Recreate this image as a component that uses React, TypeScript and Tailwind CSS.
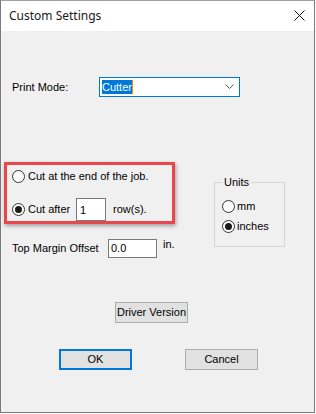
import React from 'react';

function Radio({ checked }: { checked?: boolean }) {
  return (
    <span className="w-[13px] h-[13px] shrink-0 rounded-full border border-[#333333] bg-white flex items-center justify-center">
      {checked && <span className="w-[7px] h-[7px] rounded-full bg-[#1a1a1a]" />}
    </span>
  );
}

function Button({ label, primary }: { label: string; primary?: boolean }) {
  return (
    <button
      className={`w-[73px] h-[21px] bg-[#e1e1e1] flex items-center justify-center text-[11px] leading-none ${
        primary ? 'border-2 border-[#0078d7]' : 'border border-[#adadad]'
      }`}
    >
      {label}
    </button>
  );
}

export default function App() {
  return (
    <div className="w-[316px] h-[414px] bg-white">
      <div className="w-[315px] h-[413px] border border-[#7a7a7a] border-t-[#a0a0a0] bg-[#f0f0f0] flex flex-col text-black text-[11px] font-['Liberation_Sans',Arial,sans-serif]">
        {/* title bar */}
        <div className="h-[30px] shrink-0 bg-white flex items-center justify-between pl-[8px] pr-[9px]">
          <span className="text-[12px] font-['Noto_Sans',sans-serif] text-[#1a1a1a]">Custom Settings</span>
          <svg width="11" height="11" viewBox="0 0 11 11" className="mb-[1px]">
            <path d="M0.5 0.5 L10.5 10.5 M10.5 0.5 L0.5 10.5" stroke="#111" strokeWidth="1" fill="none" />
          </svg>
        </div>

        {/* print mode */}
        <div className="mt-[46px] h-[20px] flex items-center pl-[11px]">
          <span className="w-[87px]">Print Mode:</span>
          <div className="w-[141px] h-[20px] border border-[#0078d7] bg-white flex items-center justify-between pl-[2px] pr-[5px]">
            <span className="bg-[#0078d7] text-white leading-[14px] h-[14px] border-r border-[#ff8a00]">Cutter</span>
            <svg width="9" height="6" viewBox="0 0 9 6">
              <polyline points="0.5,0.5 4.5,4.5 8.5,0.5" stroke="#555" strokeWidth="1" fill="none" />
            </svg>
          </div>
        </div>

        {/* cut options + units */}
        <div className="mt-[65px] flex items-start pl-[3px]">
          <div className="w-[171px] flex flex-col">
            <div className="h-[62px] border-[3px] border-[#e9474b] shadow-[1px_2px_4px_rgba(0,0,0,0.35)] pt-[5px] pl-[5px] flex flex-col">
              <label className="h-[13px] flex items-center gap-[3px]">
                <Radio />
                <span>Cut at the end of the job.</span>
              </label>
              <div className="mt-[15px] h-[23px] flex items-center">
                <Radio checked />
                <span className="w-[51px] pl-[3px]">Cut after</span>
                <div className="w-[30px] h-[23px] border border-[#7a7a7a] bg-white pl-[3px] pt-[3px]">1</div>
                <span className="ml-[7px]">row(s).</span>
              </div>
            </div>
            <div className="mt-[15px] h-[19px] flex items-center pl-[8px]">
              <span className="w-[96px]">Top Margin Offset</span>
              <div className="w-[49px] h-[19px] border border-[#7a7a7a] bg-white pl-[2px] flex items-center">0.0</div>
              <span className="ml-[6px] self-start -mt-[3px]">in.</span>
            </div>
          </div>

          <fieldset className="ml-[39px] mt-[14px] w-[71px] border border-[#d5d5d5] pb-[13px]">
            <legend className="ml-[7px] px-[2px] leading-[13px]">Units</legend>
            <label className="mt-[11px] ml-[7px] h-[13px] flex items-center gap-[2px]">
              <Radio />
              <span>mm</span>
            </label>
            <label className="mt-[7px] ml-[7px] h-[13px] flex items-center gap-[2px]">
              <Radio checked />
              <span>inches</span>
            </label>
          </fieldset>
        </div>

        {/* driver version */}
        <div className="mt-[44px] pl-[114px] flex">
          <Button label="Driver Version" />
        </div>

        {/* ok / cancel */}
        <div className="mt-[26px] pl-[58px] flex gap-[53px]">
          <Button label="OK" primary />
          <Button label="Cancel" />
        </div>
      </div>
    </div>
  );
}
